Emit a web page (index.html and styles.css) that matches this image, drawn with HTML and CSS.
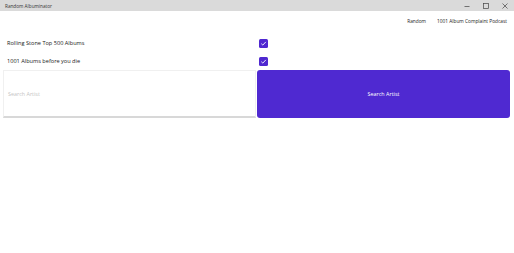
FILE: index.html
```html
<!DOCTYPE html>
<html>
<head>
<meta charset="utf-8">
<link rel="stylesheet" href="styles.css">
</head>
<body>
<div class="titlebar">
  <span class="title">Random Albuminator</span>
  <div class="controls">
    <svg class="ctl" width="10" height="10" viewBox="0 0 10 10"><path d="M2.5 5.5h5" stroke="#444" stroke-width="0.7"/></svg>
    <svg class="ctl" width="10" height="10" viewBox="0 0 10 10"><rect x="2.5" y="2.5" width="5" height="5" fill="none" stroke="#444" stroke-width="0.7"/></svg>
    <svg class="ctl" width="10" height="10" viewBox="0 0 10 10"><path d="M2.5 2.5l5 5M7.5 2.5l-5 5" stroke="#444" stroke-width="0.7"/></svg>
  </div>
</div>
<nav class="nav">
  <span>Random</span>
  <span>1001 Album Complaint Podcast</span>
</nav>
<div class="rows">
  <div class="row">
    <span class="label">Rolling Stone Top 500 Albums</span>
    <span class="check"><svg width="9" height="9" viewBox="0 0 9 9"><path d="M2.3 4.7l1.5 1.4 3-3.2" fill="none" stroke="#fff" stroke-width="0.9"/></svg></span>
  </div>
  <div class="row">
    <span class="label">1001 Albums before you die</span>
    <span class="check"><svg width="9" height="9" viewBox="0 0 9 9"><path d="M2.3 4.7l1.5 1.4 3-3.2" fill="none" stroke="#fff" stroke-width="0.9"/></svg></span>
  </div>
</div>
<div class="search">
  <div class="input"><span class="placeholder">Search Artist</span></div>
  <div class="button">Search Artist</div>
</div>
</body>
</html>
```
FILE: styles.css
```css
html, body {
  margin: 0;
  padding: 0;
  background: #fff;
  font-family: "Open Sans", "Noto Sans", sans-serif;
  color: #1a1a1a;
}
.titlebar {
  height: 11px;
  background: #dadada;
  display: flex;
  align-items: center;
  justify-content: space-between;
}
.title {
  font-size: 4.7px;
  padding-left: 5px;
  color: #333;
}
.controls {
  display: flex;
  gap: 9px;
  padding-right: 4px;
}
.nav {
  display: flex;
  justify-content: flex-end;
  gap: 11px;
  padding: 4px 7px 0 0;
  height: 11px;
  align-items: center;
  font-size: 4.8px;
  color: #222;
}
.rows {
  margin-top: 8px;
  width: 268px;
}
.row {
  display: flex;
  justify-content: space-between;
  align-items: center;
  height: 18px;
  padding-left: 7px;
}
.label {
  font-size: 5.6px;
}
.check {
  width: 9px;
  height: 9px;
  background: #4f28d0;
  border-radius: 1.5px;
  display: flex;
}
.search {
  display: flex;
  gap: 1px;
  padding: 0 4px 0 3px;
  margin-top: 0;
}
.input {
  flex: 0 0 253px;
  border: 1px solid #f0f0f0;
  border-bottom: 2px solid #d8d8d8;
  display: flex;
  align-items: center;
  padding-left: 4px;
  box-sizing: border-box;
  height: 48px;
}
.placeholder {
  font-size: 5.4px;
  color: #c4c4c4;
}
.button {
  flex: 1;
  height: 48px;
  background: #4f29d1;
  border-radius: 3px;
  color: #fff;
  font-size: 5.4px;
  display: flex;
  align-items: center;
  justify-content: center;
}
```
